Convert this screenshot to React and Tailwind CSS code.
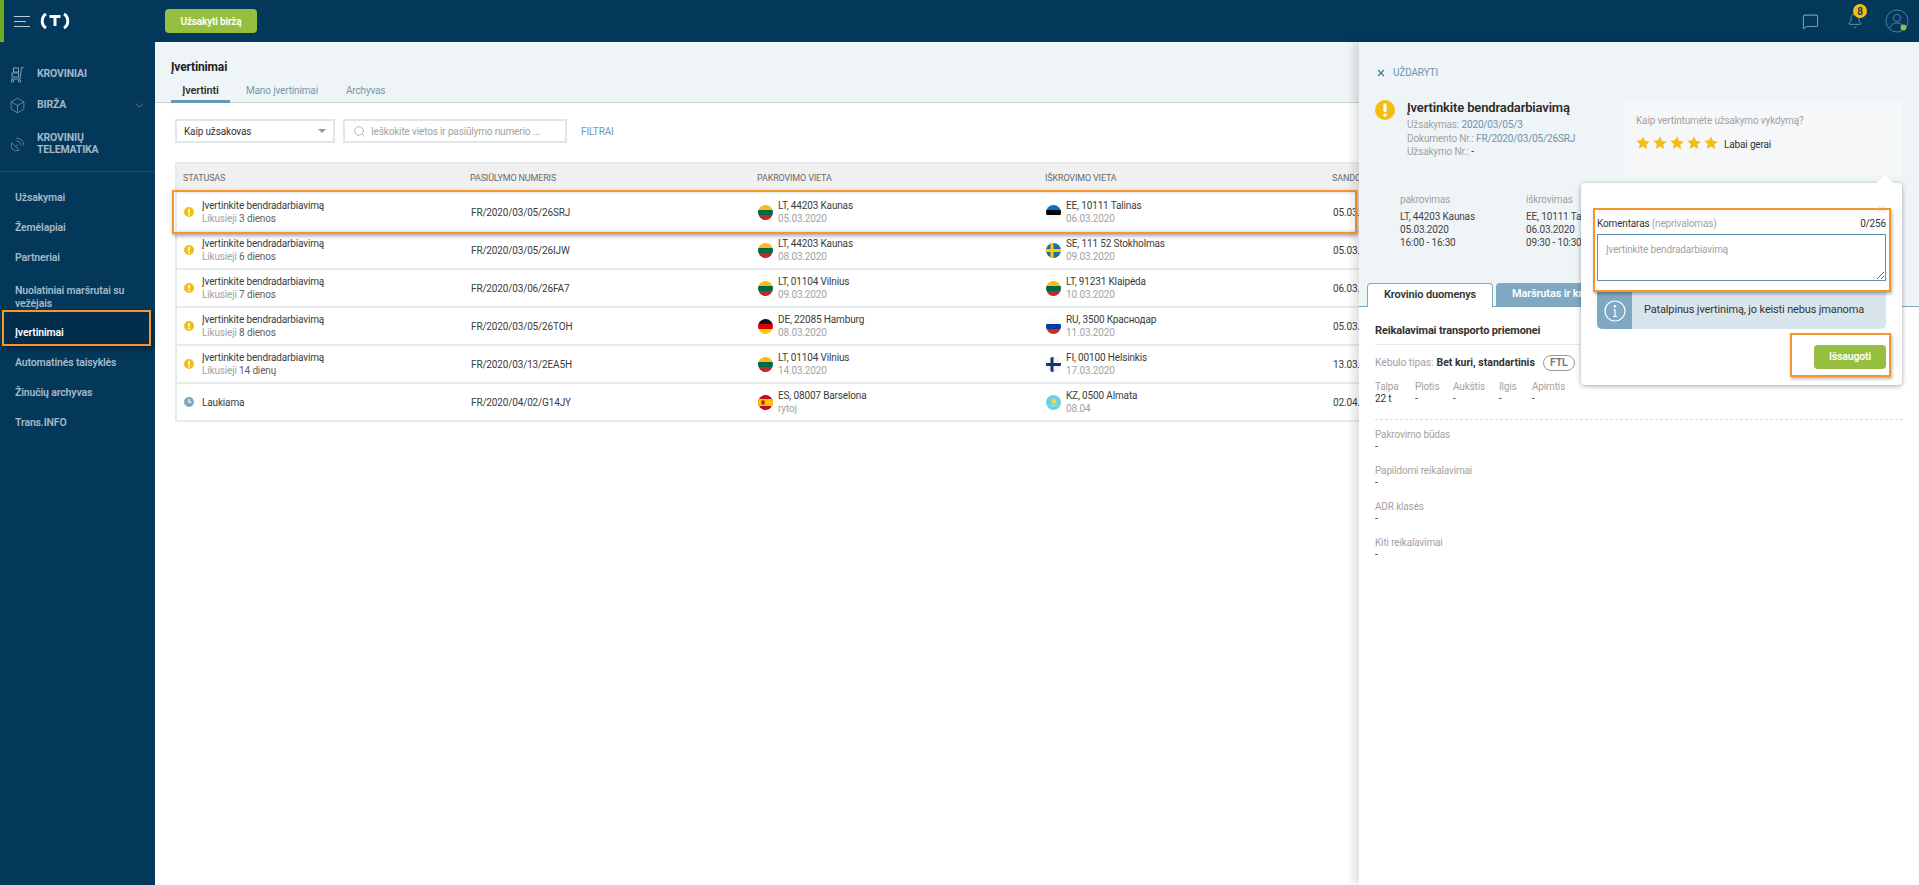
import React from "react";
import { Bell, Box, ChevronDown, MessageSquare, Search, SatelliteDish, X } from "lucide-react";

const rows = [
  { num: "FR/2020/03/05/26SRJ", left: "3 dienos", from: "LT, 44203 Kaunas", fromFlag: "lt", fromDate: "05.03.2020", to: "EE, 10111 Talinas", toFlag: "ee", toDate: "06.03.2020", deal: "05.03.2020" },
  { num: "FR/2020/03/05/26IJW", left: "6 dienos", from: "LT, 44203 Kaunas", fromFlag: "lt", fromDate: "08.03.2020", to: "SE, 111 52 Stokholmas", toFlag: "se", toDate: "09.03.2020", deal: "05.03.2020" },
  { num: "FR/2020/03/06/26FA7", left: "7 dienos", from: "LT, 01104 Vilnius", fromFlag: "lt", fromDate: "09.03.2020", to: "LT, 91231 Klaipėda", toFlag: "lt", toDate: "10.03.2020", deal: "06.03.2020" },
  { num: "FR/2020/03/05/26TOH", left: "8 dienos", from: "DE, 22085 Hamburg", fromFlag: "de", fromDate: "08.03.2020", to: "RU, 3500 Краснодар", toFlag: "ru", toDate: "11.03.2020", deal: "05.03.2020" },
  { num: "FR/2020/03/13/2EA5H", left: "14 dienų", from: "LT, 01104 Vilnius", fromFlag: "lt", fromDate: "14.03.2020", to: "FI, 00100 Helsinkis", toFlag: "fi", toDate: "17.03.2020", deal: "13.03.2020" },
  { num: "FR/2020/04/02/G14JY", from: "ES, 08007 Barselona", fromFlag: "es", fromDate: "rytoj", to: "KZ, 0500 Almata", toFlag: "kz", toDate: "08.04", deal: "02.04.2020" },
];

const menu = ["Užsakymai", "Žemėlapiai", "Partneriai"];
const menuBottom = ["Automatinės taisyklės", "Žinučių archyvas", "Trans.INFO"];

const stripes = {
  lt: ["#fdb913", "#006a44", "#c1272d"],
  ee: ["#0072ce", "#000000", "#f4f4f4"],
  de: ["#111111", "#dd0000", "#ffce00"],
  ru: ["#f4f4f4", "#0039a6", "#d52b1e"],
  es: ["#c60b1e", "#ffc400", "#c60b1e"],
};

function Flag({ code }) {
  const s = stripes[code];
  return (
    <svg width="15" height="15" viewBox="0 0 15 15" className="mt-px shrink-0">
      <defs>
        <clipPath id={"c" + code}>
          <circle cx="7.5" cy="7.5" r="7.5" />
        </clipPath>
      </defs>
      <g clipPath={"url(#c" + code + ")"}>
        {s && code !== "es" && (
          <>
            <rect width="15" height="5" fill={s[0]} />
            <rect y="5" width="15" height="5" fill={s[1]} />
            <rect y="10" width="15" height="5" fill={s[2]} />
          </>
        )}
        {code === "es" && (
          <>
            <rect width="15" height="15" fill={s[0]} />
            <rect y="4" width="15" height="7" fill={s[1]} />
            <rect x="3.5" y="5.5" width="3" height="4" fill="#ad1519" />
          </>
        )}
        {code === "se" && (
          <>
            <rect width="15" height="15" fill="#1b6da8" />
            <rect x="4.5" width="3" height="15" fill="#fecc00" />
            <rect y="6" width="15" height="3" fill="#fecc00" />
          </>
        )}
        {code === "fi" && (
          <>
            <rect width="15" height="15" fill="#f4f4f4" />
            <rect x="4.5" width="3" height="15" fill="#10356f" />
            <rect y="6" width="15" height="3" fill="#10356f" />
          </>
        )}
        {code === "kz" && (
          <>
            <rect width="15" height="15" fill="#6fd0e0" />
            <circle cx="8" cy="6.5" r="2.5" fill="#f2d64b" />
            <rect x="4.5" y="10" width="7" height="1" fill="#f2d64b" />
          </>
        )}
      </g>
    </svg>
  );
}

function WarnIcon({ size = 10 }) {
  return (
    <svg width={size} height={size} viewBox="0 0 20 20" className="shrink-0">
      <circle cx="10" cy="10" r="10" fill="#f4bd12" />
      <rect x="8.4" y="3.6" width="3.2" height="8.4" rx="1.4" fill="#fff" />
      <circle cx="10" cy="15" r="1.8" fill="#fff" />
    </svg>
  );
}

function ClockIcon() {
  return (
    <svg width="10" height="10" viewBox="0 0 20 20" className="shrink-0">
      <circle cx="10" cy="10" r="10" fill="#7fa9c3" />
      <path d="M10 4v6.5h5" fill="none" stroke="#fff" strokeWidth="2.4" />
    </svg>
  );
}

function Star() {
  return (
    <svg width="14" height="14" viewBox="0 0 20 20">
      <path d="M10 0.8l2.9 6.2 6.7.8-5 4.6 1.4 6.7L10 15l-6 3.1 1.4-6.7-5-4.6 6.7-.8z" fill="#f4bd12" />
    </svg>
  );
}

function Logo() {
  return (
    <svg width="30" height="20" viewBox="0 0 30 20" fill="none">
      <path d="M6 3C1 6 1 14 6 17" stroke="#fff" strokeWidth="3" />
      <path d="M24 3C29 6 29 14 24 17" stroke="#fff" strokeWidth="3" />
      <path d="M9.5 5.5h11M15 5.5v9.5" stroke="#fff" strokeWidth="3" />
    </svg>
  );
}

function Trolley() {
  return (
    <svg width="17" height="17" viewBox="0 0 17 17" fill="none" stroke="#8fa9bb" strokeWidth="0.9">
      <path d="M14.5 1.5h-2L11 13H2" />
      <rect x="4.5" y="2" width="5" height="4" />
      <rect x="3" y="7" width="6.5" height="4" />
      <circle cx="3.5" cy="15" r="1.2" />
      <circle cx="10.5" cy="15" r="1.2" />
    </svg>
  );
}

function Avatar() {
  return (
    <svg width="24" height="24" viewBox="0 0 24 24" fill="none" stroke="#4f7f9e" strokeWidth="1">
      <circle cx="12" cy="12" r="11" />
      <circle cx="12" cy="9" r="3.6" />
      <path d="M5 19c1-3.6 4-5 7-5s6 1.4 7 5" />
      <circle cx="18.5" cy="18.5" r="3" fill="#97bf3f" stroke="none" />
    </svg>
  );
}

function TopBar() {
  return (
    <header className="flex h-[42px] shrink-0 items-center bg-[#03385a]">
      <div className="h-full w-1 bg-[#6fac1f]" />
      <div className="ml-[10px] flex w-4 flex-col gap-[4px]">
        <span className="h-px w-4 bg-[#b9c9d4]" />
        <span className="h-px w-3 bg-[#b9c9d4]" />
        <span className="h-px w-4 bg-[#b9c9d4]" />
      </div>
      <div className="ml-[10px]">
        <Logo />
      </div>
      <button className="ml-[95px] h-6 w-[92px] rounded-[4px] bg-[#97bf3f] text-[10px] font-semibold text-white">
        Užsakyti biržą
      </button>
      <div className="ml-auto flex items-center">
        <MessageSquare size={17} strokeWidth={1.6} className="text-[#6d9ab8]" />
        <div className="relative ml-[28px]">
          <Bell size={16} strokeWidth={1.4} className="text-[#6d9ab8]" />
          <span className="absolute -top-[9px] left-[6px] flex h-[14px] w-[14px] items-center justify-center rounded-full bg-[#f4bd12] text-[10px] font-semibold text-[#03385a]">
            8
          </span>
        </div>
        <div className="mr-[10px] ml-[22px]">
          <Avatar />
        </div>
      </div>
    </header>
  );
}

function Sidebar() {
  const main = "flex items-center text-[10.5px] font-bold uppercase text-[#a3b9c8]";
  const sub = "flex h-[30px] items-center pl-[15px] text-[10.5px] font-semibold text-[#a3b9c8]";
  return (
    <aside className="flex w-[155px] shrink-0 flex-col bg-[#03385a]">
      <div className="border-b border-[#0e4f78] px-[9px] pt-[17px] pb-[9px]">
        <div className={main + " h-[30px]"}>
          <span className="w-7 shrink-0"><Trolley /></span>
          Kroviniai
        </div>
        <div className={main + " mt-px h-[30px]"}>
          <Box size={17} strokeWidth={0.9} className="mr-[11px] shrink-0 text-[#8fa9bb]" />
          Birža
          <ChevronDown size={13} strokeWidth={1.3} className="ml-auto text-[#7f9db1]" />
        </div>
        <div className={main + " mt-[6px] h-[36px] leading-[12px]"}>
          <SatelliteDish size={17} strokeWidth={0.9} className="mr-[11px] shrink-0 text-[#8fa9bb]" />
          <span>Krovinių<br />telematika</span>
        </div>
      </div>
      <nav className="pt-[11px]">
        {menu.map((m) => (
          <div key={m} className={sub}>{m}</div>
        ))}
        <div className="h-[37px] px-[15px] pt-[11px] text-[10.5px] leading-[13px] font-semibold text-[#a3b9c8]">
          Nuolatiniai maršrutai su vežėjais
        </div>
        <div className="relative ml-[2px] flex h-[36px] w-[149px] items-center border-2 border-[#f8962e] bg-[#022d4b] pt-[9px] pl-[11px] text-[10.5px] font-semibold text-white shadow-[2px_3px_4px_rgba(0,0,0,0.35)]">
          Įvertinimai
        </div>
        <div className="mt-[2px]">
          {menuBottom.map((m) => (
            <div key={m} className={sub}>{m}</div>
          ))}
        </div>
      </nav>
    </aside>
  );
}

function Table() {
  const cols = "grid grid-cols-[286px_287px_288px_287px_300px]";
  return (
    <div className="mt-[19px] ml-5 w-[1500px] border-l-2 border-[#e6eaed]">
      <div className={cols + " h-[32px] items-center bg-[#f0f0f0] border-t-2 border-[#e6eaed] text-[9px] uppercase text-[#6b6b6b]"}>
        <div className="pl-[6px]">Statusas</div>
        <div className="pl-[7px]">Pasiūlymo numeris</div>
        <div className="pl-[7px]">Pakrovimo vieta</div>
        <div className="pl-[7px]">Iškrovimo vieta</div>
        <div className="pl-[7px]">Sandorio data</div>
      </div>
      {rows.map((r, i) => (
        <div key={r.num} className={cols + " relative h-[38px] items-center border-b-2 border-[#e8ebee] text-[10px] leading-[13px] text-[#3b3b3b]"}>
          {i === 0 && (
            <div className="absolute -top-[4px] -left-[5px] h-[44px] w-[1185px] border-2 border-[#f8962e] shadow-[1px_2px_4px_rgba(0,0,0,0.35)]" />
          )}
          <div className="flex items-center pl-[7px]">
            {r.left ? <WarnIcon /> : <ClockIcon />}
            <div className="ml-[8px]">
              {r.left ? (
                <>
                  <div>Įvertinkite bendradarbiavimą</div>
                  <div className="text-[#a2a2a2]">
                    Likusieji <span className="text-[#5f5f5f]">{r.left}</span>
                  </div>
                </>
              ) : (
                <div>Laukiama</div>
              )}
            </div>
          </div>
          <div className="pl-2">{r.num}</div>
          <div className="flex items-center pl-2">
            <Flag code={r.fromFlag} />
            <div className="ml-[5px]">
              <div>{r.from}</div>
              <div className="text-[#a2a2a2]">{r.fromDate}</div>
            </div>
          </div>
          <div className="flex items-center pl-2">
            <Flag code={r.toFlag} />
            <div className="ml-[5px]">
              <div>{r.to}</div>
              <div className="text-[#a2a2a2]">{r.toDate}</div>
            </div>
          </div>
          <div className="pl-2">{r.deal}</div>
        </div>
      ))}
    </div>
  );
}

function Popover() {
  return (
    <div className="absolute top-[141px] left-[222px] h-[202px] w-[321px] rounded-[4px] bg-white px-4 pt-[33px] shadow-[0_1px_5px_rgba(0,0,0,0.35)]">
      <div className="absolute -top-[6px] right-[11px] h-3 w-3 rotate-45 bg-white" />
      <X size={12} strokeWidth={2.5} className="absolute top-[20px] right-[15px] text-[#e3e6e8]" />
      <div className="absolute top-[25px] left-3 h-[84px] w-[298px] border-2 border-[#f8962e] shadow-[1px_2px_3px_rgba(0,0,0,0.3)]" />
      <div className="flex h-[14px] items-center justify-between text-[10px] text-[#333]">
        <span>
          Komentaras <span className="text-[#a2a2a2]">(neprivalomas)</span>
        </span>
        <span>0/256</span>
      </div>
      <textarea
        readOnly
        placeholder="Įvertinkite bendradarbiavimą"
        className="mt-1 block h-[47px] w-full border border-[#5d8fb0] px-2 py-[8px] text-[10px] leading-[13px] outline-none placeholder:text-[#a2a2a2]"
      />
      <div className="mt-[11px] flex h-[37px] items-center overflow-hidden rounded-b-[5px] bg-[#d9e5ed] text-[11px] text-[#333]">
        <div className="flex h-full w-[35px] items-center justify-center bg-[#7fa9c3]">
          <svg width="22" height="22" viewBox="0 0 22 22" fill="none" stroke="#fff" strokeWidth="1.2">
            <circle cx="11" cy="11" r="10" />
            <path d="M11 9.5v6.5M9 16.5h4M9.5 9.5H11" />
            <circle cx="11" cy="6.2" r="0.7" fill="#fff" />
          </svg>
        </div>
        <span className="ml-3">Patalpinus įvertinimą, jo keisti nebus įmanoma</span>
      </div>
      <div className="relative mt-4 flex justify-end">
        <button className="h-6 w-[72px] rounded-[4px] bg-[#97bf3f] text-[10.5px] font-semibold text-white">
          Išsaugoti
        </button>
        <div className="absolute -top-3 -right-[5px] h-[44px] w-[101px] border-2 border-[#f8962e] shadow-[1px_2px_3px_rgba(0,0,0,0.3)]" />
      </div>
    </div>
  );
}

function Panel() {
  const label = "text-[10px] leading-[12px] text-[#a2a2a2]";
  const value = "text-[10px] leading-[12px] text-[#333]";
  return (
    <div className="absolute top-[42px] right-0 bottom-0 w-[560px] bg-white shadow-[-5px_0_9px_rgba(0,0,0,0.13)]">
      <div className="flex h-[265px] flex-col border-b border-[#7fa9c3] bg-[#eff4f7]">
        <div className="flex items-center px-[17px] pt-6 text-[10px] leading-[14px] text-[#6b93ac]">
          <X size={10} strokeWidth={3.5} className="mr-[7px] text-[#4f7f9e]" />
          UŽDARYTI
        </div>
        <div className="mt-5 flex justify-between pr-[17px] pl-4">
          <div className="flex">
            <WarnIcon size={20} />
            <div className="ml-3">
              <div className="text-[13px] leading-4 font-semibold text-[#2b2b2b]">Įvertinkite bendradarbiavimą</div>
              <div className="mt-[2px] text-[10px] leading-[13.5px] text-[#a2a2a2]">
                <div>Užsakymas: <span className="text-[#6b93ac]">2020/03/05/3</span></div>
                <div>Dokumento Nr.: <span className="text-[#6b93ac]">FR/2020/03/05/26SRJ</span></div>
                <div>Užsakymo Nr.: <span className="text-[#333]">-</span></div>
              </div>
            </div>
          </div>
          <div className="mt-px h-[74px] w-[278px] bg-[#f5f7f9] px-3 pt-[13px]">
            <div className="text-[10px] leading-[13px] text-[#a2a2a2]">Kaip vertintumėte užsakymo vykdymą?</div>
            <div className="mt-[6px] flex items-center gap-[3px]">
              <Star /><Star /><Star /><Star /><Star />
              <span className="ml-[3px] pt-[4px] text-[10px] text-[#333]">Labai gerai</span>
            </div>
          </div>
        </div>
        <div className="mt-[18px] flex pl-[41px] text-[10px] leading-[13px] text-[#444]">
          <div className="w-[126px]">
            <div className="mb-1 text-[#a2a2a2]">pakrovimas</div>
            <div>LT, 44203 Kaunas</div>
            <div>05.03.2020</div>
            <div>16:00 - 16:30</div>
          </div>
          <div>
            <div className="mb-1 text-[#a2a2a2]">iškrovimas</div>
            <div>EE, 10111 Talinas</div>
            <div>06.03.2020</div>
            <div>09:30 - 10:30</div>
          </div>
        </div>
        <div className="mt-auto ml-2 flex gap-[3px]">
          <div className="-mb-px flex h-6 w-[126px] items-center justify-center rounded-t-[4px] border border-b-0 border-[#7fa9c3] bg-white text-[11px] font-semibold text-[#333]">
            Krovinio duomenys
          </div>
          <div className="flex h-[23px] w-[140px] items-center rounded-t-[4px] bg-[#7fa9c3] pl-4 text-[11px] font-semibold text-white">
            Maršrutas ir krovinys
          </div>
        </div>
      </div>
      <div className="px-4 pt-[17px]">
        <div className="text-[11px] leading-[14px] font-bold text-[#333]">Reikalavimai transporto priemonei</div>
        <div className="mt-[6px] border-b border-[#e8ebee]" />
        <div className="mt-[10px] flex h-[16px] items-center text-[10.5px]">
          <span className="text-[#a2a2a2]">Kėbulo tipas:</span>
          <span className="ml-[3px] font-bold tracking-normal text-[#333]">Bet kuri, standartinis</span>
          <span className="ml-2 flex h-4 w-8 items-center justify-center rounded-full border border-[#999] font-semibold text-[#777]">FTL</span>
        </div>
        <div className="mt-[10px] flex">
          {[["Talpa", "22 t", "w-10"], ["Plotis", "-", "w-[38px]"], ["Aukštis", "-", "w-[46px]"], ["Ilgis", "-", "w-[33px]"], ["Apimtis", "-", "w-10"]].map(([l, v, w]) => (
            <div key={l} className={w}>
              <div className={label}>{l}</div>
              <div className={value}>{v}</div>
            </div>
          ))}
        </div>
        <div className="mt-[14px] mb-[9px] w-[528px] border-b border-dashed border-[#d5e1e9]" />
        {["Pakrovimo būdas", "Papildomi reikalavimai", "ADR klasės", "Kiti reikalavimai"].map((l) => (
          <div key={l} className="mb-3">
            <div className={label}>{l}</div>
            <div className={value}>-</div>
          </div>
        ))}
      </div>
      <Popover />
    </div>
  );
}

export default function App() {
  return (
    <div className="relative flex h-screen flex-col overflow-hidden bg-white font-['Roboto','Noto_Sans',sans-serif] tracking-[-0.15px]">
      <TopBar />
      <div className="flex min-h-0 flex-1">
        <Sidebar />
        <main className="mr-[560px] min-w-0 flex-1 overflow-hidden">
          <div className="h-[61px] border-b border-[#cfd2d4] bg-[#eff4f7] pl-4">
            <div className="pt-[18px] text-[12px] leading-[14px] font-bold text-[#222]">Įvertinimai</div>
            <div className="mt-[6px] flex text-[10px]">
              <div className="h-[23px] w-[59px] border-b-[3px] border-[#6699b8] pt-[3px] text-center text-[11px] font-semibold text-[#333]">Įvertinti</div>
              <div className="ml-4 pt-[3px] text-[#6f97b1]">Mano įvertinimai</div>
              <div className="ml-7 pt-[3px] text-[#6f97b1]">Archyvas</div>
            </div>
          </div>
          <div className="mt-[16px] ml-5 flex items-center text-[10px]">
            <div className="flex h-6 w-40 items-center justify-between border-2 border-[#e3e6e9] px-[7px] text-[#333]">
              Kaip užsakovas
              <span className="h-0 w-0 border-x-[4px] border-t-[4px] border-x-transparent border-t-[#9a9a9a]" />
            </div>
            <div className="ml-2 flex h-6 w-[224px] items-center border-2 border-[#e3e6e9] px-2 whitespace-nowrap text-[#a2a2a2]">
              <Search size={13} strokeWidth={1.2} className="mr-[5px] shrink-0 text-[#999]" />
              Ieškokite vietos ir pasiūlymo numerio ...
            </div>
            <span className="ml-[14px] text-[#6f97b1]">FILTRAI</span>
          </div>
          <Table />
        </main>
      </div>
      <Panel />
    </div>
  );
}
